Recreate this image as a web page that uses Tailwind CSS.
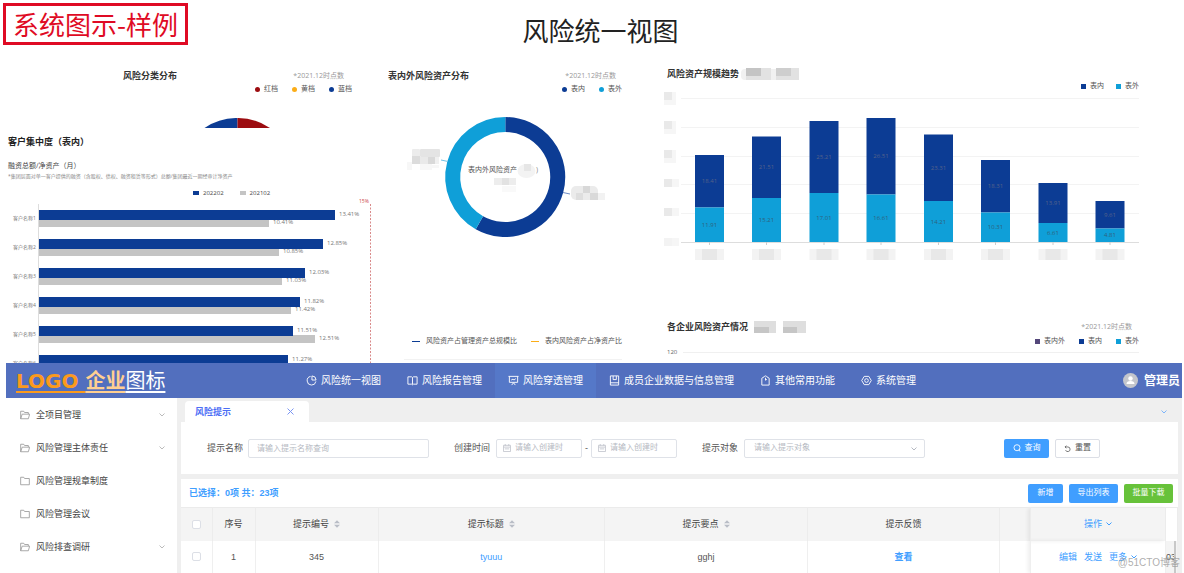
<!DOCTYPE html>
<html lang="zh-CN">
<head>
<meta charset="utf-8">
<meta name="viewport" content="width=device-width, initial-scale=1">
<title>风险统一视图</title>
<script src="https://cdn.jsdelivr.net/npm/@tailwindcss/browser@4"></script>
</head>
<body class="bg-white font-['Liberation_Sans','Noto_Sans_CJK_SC',sans-serif] text-[9px] leading-3 text-[#555] overflow-x-hidden">

<header class="grid grid-cols-[1fr_auto_1fr] items-start pt-[3px] pl-[3px]">
  <div class="justify-self-start border-3 border-[#df0a24] px-[7px] h-[42px] flex items-center text-[26px] leading-9 text-[#df0a24] font-['Noto_Sans_CJK_SC',sans-serif]">系统图示-样例</div>
  <h1 class="pt-3 pl-[14px] text-[26px] leading-[30px] text-[#222] font-['Noto_Sans_CJK_SC',sans-serif]">风险统一视图</h1>
</header>

<main class="grid grid-cols-[380fr_270fr_534fr] h-[318px] overflow-hidden font-['Open_Sans','Noto_Sans_CJK_SC',sans-serif]">
  <div>
    <section class="h-[83px] flex flex-col">
      <div class="flex justify-between pt-[25px] pl-[123px] pr-[36px]">
        <h2 class="font-bold text-[#333]">风险分类分布</h2>
        <span class="text-[7px] text-[#999]">*2021.12时点数</span>
      </div>
      <ul class="flex justify-end gap-[14px] pr-7 pt-px text-[7px] text-[#555]">
        <li class="flex items-center gap-1"><i class="size-[5px] rounded-full bg-[#9c0c10]"></i>红档</li>
        <li class="flex items-center gap-1"><i class="size-[5px] rounded-full bg-[#fbad18]"></i>黄档</li>
        <li class="flex items-center gap-1"><i class="size-[5px] rounded-full bg-[#0c3c94]"></i>蓝档</li>
      </ul>
      <svg class="w-full h-[10px] mt-auto" viewBox="0 118 380 10" aria-hidden="true">
        <path d="M204.500 128A56.500 56.500 0 0 1 237.500 118V128Z" fill="#0c3c94"/><path d="M237.500 118A56.500 56.500 0 0 1 270 128H237.500Z" fill="#9c0c10"/>
      </svg>
    </section>
    <section>
      <h2 class="pl-2 pt-2 text-[9px] font-bold text-[#222]">客户集中度（表内）</h2>
      <h3 class="pl-2 pt-3 text-[7px] text-[#444]">融资总额/净资产（月）</h3>
      <p class="pl-2 text-[5px] leading-[8px] text-[#888]">*集团层面对单一客户提供的融资（含股权、债权、融资租赁等形式）总额/集团最近一期经审计净资产</p>
      <ul class="flex gap-4 pl-[193px] pt-[7px] text-[6px] text-[#444]">
        <li class="flex items-center gap-1"><i class="w-[6px] h-1 bg-[#0c3c94]"></i>202202</li>
        <li class="flex items-center gap-1"><i class="w-[6px] h-1 bg-[#c4c4c4]"></i>202102</li>
      </ul>
      <svg id="customers" class="w-full h-[164px]" viewBox="0 199 380 164" role="img" aria-label="客户集中度"></svg>
    </section>
  </div>

  <section class="flex flex-col">
    <div class="flex justify-between pt-[25px] pl-2 pr-[34px]">
      <h2 class="font-bold text-[#333]">表内外风险资产分布</h2>
      <span class="text-[7px] text-[#999]">*2021.12时点数</span>
    </div>
    <ul class="flex justify-end gap-[14px] pr-7 pt-px text-[7px] text-[#555]">
      <li class="flex items-center gap-1"><i class="size-[5px] rounded-full bg-[#0c3c94]"></i>表内</li>
      <li class="flex items-center gap-1"><i class="size-[5px] rounded-full bg-[#0f9fd8]"></i>表外</li>
    </ul>
    <svg class="w-full h-[140px] mt-[14px]" viewBox="380 110 270 140" role="img" aria-label="表内外风险资产分布">
      <g fill="none" stroke-width="15">
        <path d="M505.300 125.500A52.500 52.500 0 1 1 479.400 223.700" stroke="#0c3c94"/>
        <path d="M479.400 223.700A52.500 52.500 0 0 1 505.300 125.500" stroke="#0f9fd8"/>
      </g>
      <path d="M441 161l7 1.500" stroke="#6fc0e4" fill="none"/><path d="M563 193.500l7 1.500" stroke="#6f8cc4" fill="none"/>
      <g fill="#f0f0f0">
        <path d="M407 163h5v8h-5zM420 165h12v6h-12zM432 166h7v3h-7z" fill="#f7f7f7"/>
        <rect x="412" y="150" width="8" height="15" rx="1" fill="#ececec"/><rect x="420" y="150" width="20" height="8" rx="1" fill="#e4e4e4"/><rect x="412" y="157" width="8" height="8" fill="#dcdcdc"/><rect x="420" y="158" width="8" height="7" fill="#e9e9e9"/><rect x="428" y="158" width="7" height="7" fill="#d9d9d9"/><rect x="435" y="158" width="4" height="7"/>
        <ellipse cx="526.500" cy="172" rx="9" ry="7" fill="#f3f3f3"/><rect x="524" y="165" width="7" height="7" fill="#e6e6e6"/>
        <rect x="494" y="179" width="22" height="7" fill="#ededed"/><rect x="502" y="179" width="7" height="7" fill="#e2e2e2"/><rect x="502" y="187" width="14" height="6" fill="#f9f9f9"/>
        <rect x="571" y="187" width="27" height="14" rx="5" fill="#ebebeb"/><rect x="583" y="187" width="7" height="7" fill="#d8d8d8"/><rect x="576" y="194" width="7" height="7" fill="#dedede"/><rect x="590" y="194" width="8" height="7" fill="#d9d9d9"/><rect x="598" y="194" width="7" height="7" fill="#f2f2f2"/>
      </g>
      <text x="468" y="173" font-size="7" fill="#555">表内外风险资产</text><text x="536" y="173" font-size="7" fill="#888">)</text>
    </svg>
    <ul class="mt-auto flex justify-end gap-[14px] pr-7 pb-3 text-[7px] text-[#555]">
      <li class="flex items-center gap-[6px]"><i class="w-2 h-px bg-[#0c3c94]"></i>风险资产占管理资产总规模比</li>
      <li class="flex items-center gap-[6px]"><i class="w-2 h-px bg-[#fbad18]"></i>表内风险资产占净资产比</li>
    </ul>
    <hr class="border-[#f2f2f2] ml-6 mr-7 mb-[3px]">
  </section>

  <div class="flex flex-col">
    <section>
      <div class="flex items-center gap-[2px] pt-[23px] pl-[17px]">
        <h2 class="font-bold text-[#333]">风险资产规模趋势</h2>
        <svg class="w-[58px] h-3" viewBox="0 0 58 12" aria-hidden="true"><rect y="1" width="58" height="11" rx="4" fill="#f1f1f1"/><path d="M5 0h25v12H5zM35 0h23v12H35z" fill="#e2e2e2"/><path d="M5 0h15v8H5z" fill="#c4c4c4"/><path d="M35 0h15v8H35z" fill="#cecece"/></svg>
      </div>
      <ul class="flex justify-end gap-3 pr-[45px] text-[7px] text-[#555]">
        <li class="flex items-center gap-1"><i class="size-[5px] bg-[#0c3c94]"></i>表内</li>
        <li class="flex items-center gap-1"><i class="size-[5px] bg-[#0f9fd8]"></i>表外</li>
      </ul>
      <svg id="trend" class="w-full h-[176px]" viewBox="650 92 534 176" role="img" aria-label="风险资产规模趋势"></svg>
    </section>
    <section class="mt-auto">
      <div class="flex items-center pl-[17px] pr-[52px]">
        <h2 class="font-bold text-[#333]">各企业风险资产情况</h2>
        <svg class="w-[52px] h-3 ml-[6px]" viewBox="0 0 52 12" aria-hidden="true"><path d="M0 0h22v12H0zM29 0h23v12H29z" fill="#dedede"/><path d="M0 6h15v6H0zM29 6h14v6H29z" fill="#c6c6c6"/></svg>
        <span class="ml-auto text-[7px] text-[#999]">*2021.12时点数</span>
      </div>
      <ul class="flex justify-end gap-[14px] pr-[45px] pt-[2px] text-[7px] text-[#555]">
        <li class="flex items-center gap-1"><i class="size-[5px] bg-[#54477a]"></i>表内外</li>
        <li class="flex items-center gap-1"><i class="size-[5px] bg-[#0c3c94]"></i>表内</li>
        <li class="flex items-center gap-1"><i class="size-[5px] bg-[#0f9fd8]"></i>表外</li>
      </ul>
      <div class="flex items-center gap-[6px] pl-[17px] pr-[45px] h-[10px] mb-[6px] text-[6px] text-[#666]">120<hr class="grow border-[#f0f0f0]"></div>
    </section>
  </div>
</main>

<div class="relative ml-[6px] mr-[2px] border-b border-[#e6e6e6]">
  <header class="flex items-stretch h-[35px] bg-[#526fbe] text-white text-[10px]">
    <a href="#" class="w-[287px] shrink-0 pl-[10px] flex items-center text-[20px] leading-6 whitespace-pre"><span class="underline decoration-2 underline-offset-3 text-[#fb9a1c] font-bold font-['DejaVu_Sans',sans-serif]">LOGO&nbsp;</span><span class="underline decoration-2 underline-offset-3 font-bold text-[#ffcf91]">企业</span><span class="underline decoration-2 underline-offset-3">图标</span></a>
    <nav class="flex items-stretch [&>a]:flex [&>a]:items-center [&>a]:gap-1 [&>a]:px-[13px] [&_svg]:size-[11px] [&_svg]:fill-none [&_svg]:stroke-current whitespace-nowrap">
      <a href="#"><svg viewBox="0 0 12 12"><path d="M5 1.500A4.800 4.800 0 1 0 10.800 7"/><path d="M6.500 1v4.500H11A4.600 4.600 0 0 0 6.500 1Z"/></svg>风险统一视图</a>
      <a href="#"><svg viewBox="0 0 12 12"><path d="M1 2h4l1 .8L7 2h4v8H7l-1 .7L5 10H1ZM6 2.800v7.500"/></svg>风险报告管理</a>
      <a href="#" class="bg-[#5578c8]" aria-current="page"><svg viewBox="0 0 12 12"><path d="M.5 1.500h11M1.500 1.500V8h9V1.500M4 11l2-2.500L8 11M3.500 5.500l2-1 1 1 2-1.500"/></svg>风险穿透管理</a>
      <a href="#"><svg viewBox="0 0 12 12"><path d="M1.500 1h9v10h-9ZM1.500 8.500h9M4.500 1v4h3.500V1"/></svg>成员企业数据与信息管理</a>
      <a href="#"><svg viewBox="0 0 12 12"><path d="M2 3.500 4.500 2a1.600 1.600 0 0 1 3 0L10 3.500V11H2ZM6 3v3M6 5h1.500"/></svg>其他常用功能</a>
      <a href="#"><svg viewBox="0 0 12 12"><path d="M3.500 1.500h5L11.200 6 8.500 10.500h-5L.8 6Z"/><circle cx="6" cy="6" r="2"/></svg>系统管理</a>
    </nav>
    <div class="ml-auto pr-[2px] flex items-center gap-[6px] text-[12px] font-bold whitespace-nowrap">
      <svg class="size-[15px]" viewBox="0 0 15 15" aria-hidden="true"><circle cx="7.500" cy="7.500" r="7.500" fill="#c4c6cc"/><circle cx="7.500" cy="5.500" r="2.200" fill="#fff"/><path d="M3.500 11q0-3 4-3t4 3Z" fill="#fff"/></svg>管理员
    </div>
  </header>

  <div class="flex">
    <aside class="w-[171px] shrink-0">
      <ul class="[&_a]:flex [&_a]:items-center [&_a]:h-[33px] [&_a]:pl-[14px] [&_a]:pr-3 [&_a]:gap-[6px] text-[#444]">
        <li><a href="#"><svg class="size-[10px] fill-none text-[#999] stroke-current" viewBox="0 0 12 12"><path d="M.8 10.500V1.500h3.700l1 1.500H10v2M.8 10.500 2.600 5h9L10 10.500Z"/></svg>全项目管理<svg class="ml-auto w-[6px] h-1 fill-none text-[#bbb] stroke-current" viewBox="0 0 6 4"><path d="m.5.500 2.500 2.500L5.500.500"/></svg></a></li>
        <li><a href="#"><svg class="size-[10px] fill-none text-[#999] stroke-current" viewBox="0 0 12 12"><path d="M.8 10.500V1.500h3.700l1 1.500H10v2M.8 10.500 2.600 5h9L10 10.500Z"/></svg>风险管理主体责任<svg class="ml-auto w-[6px] h-1 fill-none text-[#bbb] stroke-current" viewBox="0 0 6 4"><path d="m.5.500 2.500 2.500L5.500.500"/></svg></a></li>
        <li><a href="#"><svg class="size-[10px] fill-none text-[#999] stroke-current" viewBox="0 0 12 12"><path d="M.8 10.500V1.500h3.700l1 1.500h5.700v7.500Z"/></svg>风险管理规章制度</a></li>
        <li><a href="#"><svg class="size-[10px] fill-none text-[#999] stroke-current" viewBox="0 0 12 12"><path d="M.8 10.500V1.500h3.700l1 1.500h5.700v7.500Z"/></svg>风险管理会议</a></li>
        <li><a href="#"><svg class="size-[10px] fill-none text-[#999] stroke-current" viewBox="0 0 12 12"><path d="M.8 10.500V1.500h3.700l1 1.500H10v2M.8 10.500 2.600 5h9L10 10.500Z"/></svg>风险排查调研<svg class="ml-auto w-[6px] h-1 fill-none text-[#bbb] stroke-current" viewBox="0 0 6 4"><path d="m.5.500 2.500 2.500L5.500.500"/></svg></a></li>
      </ul>
    </aside>

    <div class="grow min-w-0 bg-[#efefef] pl-1 pr-1">
      <div class="flex items-end h-6 pl-1 pr-[11px]">
        <div class="w-[124px] h-[21px] rounded-t bg-white flex items-center justify-between pl-[10px] pr-[15px] font-bold text-[#4c6ef5]">风险提示
          <button aria-label="关闭" class="cursor-pointer text-[#7c96f2]"><svg class="size-[7px] fill-none stroke-current" viewBox="0 0 7 7"><path d="m.5.500 6 6M6.500.500l-6 6"/></svg></button>
        </div>
        <button aria-label="展开" class="ml-auto mb-2 text-[#7db5fa]"><svg class="w-[6px] h-1 fill-none stroke-current" viewBox="0 0 6 4"><path d="m.5.500 2.500 2.500L5.500.500"/></svg></button>
      </div>

      <form class="flex items-center h-[52px] bg-white pl-[26px] pr-[78px] whitespace-nowrap">
        <label for="name">提示名称</label>
        <input id="name" placeholder="请输入提示名称查询" class="ml-[5px] w-[181px] h-[19px] rounded-xs border border-[#dfe2e8] px-2 placeholder:text-[#b5b9c2] text-[8px]">
        <label for="from" class="ml-[25px]">创建时间</label>
        <span class="ml-[6px] flex items-center w-[86px] h-[19px] rounded-xs border border-[#dfe2e8] px-[6px] gap-1"><svg class="size-2 shrink-0 fill-none text-[#c4c7ce] stroke-current" viewBox="0 0 9 9"><path d="M.5 1.500h8v7h-8ZM.5 3.500h8M2.500 0v2M6.500 0v2M2 5.500h5"/></svg><input id="from" placeholder="请输入创建时" class="min-w-0 w-full text-[8px] placeholder:text-[#b5b9c2]"></span>
        <span class="px-[3px]">-</span>
        <span class="flex items-center w-[86px] h-[19px] rounded-xs border border-[#dfe2e8] px-[6px] gap-1"><svg class="size-2 shrink-0 fill-none text-[#c4c7ce] stroke-current" viewBox="0 0 9 9"><path d="M.5 1.500h8v7h-8ZM.5 3.500h8M2.500 0v2M6.500 0v2M2 5.500h5"/></svg><input aria-label="结束时间" placeholder="请输入创建时" class="min-w-0 w-full text-[8px] placeholder:text-[#b5b9c2]"></span>
        <label for="target" class="ml-[25px]">提示对象</label>
        <span class="ml-[6px] relative">
          <select id="target" class="appearance-none block w-[181px] h-[19px] rounded-xs border border-[#dfe2e8] px-[9px] text-[8px] text-[#b5b9c2]"><option>请输入提示对象</option></select>
          <svg class="absolute right-2 top-2 w-[6px] h-1 fill-none text-[#b5b9c2] stroke-current pointer-events-none" viewBox="0 0 6 4"><path d="m.5.500 2.500 2.500L5.500.500"/></svg>
        </span>
        <button type="submit" class="ml-auto w-[45px] h-[19px] rounded-xs bg-[#409eff] text-white text-[8px] flex items-center justify-center gap-1"><svg class="size-2 fill-none stroke-current" viewBox="0 0 9 9"><circle cx="4.500" cy="4.200" r="3.400"/><path d="m6.500 6.500 1.500 2"/></svg>查询</button>
        <button type="reset" class="ml-[6px] w-[45px] h-[19px] rounded-xs border border-[#dcdfe6] text-[8px] flex items-center justify-center gap-1"><svg class="size-[7px] fill-none stroke-current" viewBox="0 0 9 9"><path d="M1.500 2.500h3.500a3 3 0 1 1-3 4M3 .8 1.300 2.500 3 4.200"/></svg>重置</button>
      </form>

      <section class="mt-[5px] bg-white">
        <div class="flex items-center gap-[6px] h-7 pl-2 pr-[5px] text-[8px] text-white [&>button]:h-[19px] [&>button]:rounded-xs">
          <p class="mr-auto text-[9px] font-bold text-[#409eff]">已选择：0项 共：23项</p>
          <button class="w-[35px] bg-[#409eff]">新增</button>
          <button class="w-[49px] bg-[#409eff]">导出列表</button>
          <button class="w-[49px] bg-[#67c23a]">批量下载</button>
        </div>
        <table class="w-full table-fixed border-collapse text-center [&_th]:font-normal [&_th]:p-0 [&_td]:p-0 whitespace-nowrap">
          <colgroup><col class="w-[31px]"><col class="w-[43px]"><col class="w-[123px]"><col><col class="w-[203px]"><col class="w-[192px]"><col class="w-[31px]"><col class="w-[135px]"><col class="w-[12px]"></colgroup>
          <thead class="bg-[#f4f4f4] text-[#444]">
            <tr class="h-[33px] border-t border-[#ebebeb] [&>th]:border-r [&>th]:border-[#ececec]">
              <th><input type="checkbox" aria-label="全选" class="appearance-none block mx-auto size-[9px] bg-white border border-[#dcdfe6] rounded-xs"></th>
              <th>序号</th>
              <th><span class="inline-flex items-center gap-[5px]">提示编号<svg class="w-[6px] h-2 fill-[#b9bdc6]" viewBox="0 0 6 8"><path d="M0 3.300 3 .3l3 3ZM0 4.700h6l-3 3Z"/></svg></span></th>
              <th><span class="inline-flex items-center gap-[5px]">提示标题<svg class="w-[6px] h-2 fill-[#b9bdc6]" viewBox="0 0 6 8"><path d="M0 3.300 3 .3l3 3ZM0 4.700h6l-3 3Z"/></svg></span></th>
              <th><span class="inline-flex items-center gap-[5px]">提示要点<svg class="w-[6px] h-2 fill-[#b9bdc6]" viewBox="0 0 6 8"><path d="M0 3.300 3 .3l3 3ZM0 4.700h6l-3 3Z"/></svg></span></th>
              <th>提示反馈</th><th></th>
              <th class="shadow-[-3px_0_4px_rgba(0,0,0,0.07)]"><button class="inline-flex items-center gap-1 text-[#409eff]">操作<svg class="w-[6px] h-1 fill-none stroke-current" viewBox="0 0 6 4"><path d="m.5.500 2.500 2.500L5.500.500"/></svg></button></th>
              <th class="bg-white"></th>
            </tr>
          </thead>
          <tbody>
            <tr class="h-8 [&>td]:border-r [&>td]:border-[#efefef]">
              <td><input type="checkbox" aria-label="选择第1行" class="appearance-none block mx-auto size-[9px] bg-white border border-[#dcdfe6] rounded-xs"></td>
              <td>1</td><td>345</td><td><a href="#" class="text-[#409eff]">tyuuu</a></td><td>gghj</td><td><a href="#" class="font-bold text-[#409eff]">查看</a></td><td></td>
              <td class="shadow-[-3px_0_4px_rgba(0,0,0,0.07)]"><span class="inline-flex items-center gap-[7px] text-[#409eff]"><a href="#">编辑</a><a href="#">发送</a><a href="#" class="inline-flex items-center gap-1">更多<svg class="w-[6px] h-1 fill-none stroke-current" viewBox="0 0 6 4"><path d="m.5.500 2.500 2.500L5.500.500"/></svg></a></span></td>
              <td class="bg-[#f4f4f4] overflow-hidden"><div class="h-8 w-2 leading-8 overflow-hidden border-r-2 border-[#c8c8c8] box-content text-left">03</div></td>
            </tr>
          </tbody>
        </table>
      </section>
    </div>
  </div>
  <span class="absolute right-[2px] bottom-[2px] text-[10px] leading-4 text-[#999]/80 pointer-events-none">@51CTO博客</span>
</div>

<script>
  // Horizontal bars: current period over previous period, one pair per customer
  const current = [[13.41, 335], [12.85, 323], [12.03, 305], [11.82, 300], [11.51, 293], [11.27, 288]];
  const previous = [[10.41, 269], [10.85, 279], [11.03, 282], [11.42, 291], [12.51, 315]];
  const label = `font-size="6" fill="#777"`;
  let h = `<path d="M38.500 204V363" stroke="#ddd"/>`;
  previous.forEach(([v, x], i) => {
    const y = 219 + i * 29;
    h += `<rect x="39" y="${y}" width="${x - 39}" height="8" fill="#c4c4c4"/><text x="${x + 4}" y="${y + 5}" ${label}>${v.toFixed(2)}%</text>`;
  });
  current.forEach(([v, x], i) => {
    const y = 210 + i * 29;
    h += `<rect x="39" y="${y}" width="${x - 39}" height="10" fill="#0c3c94"/><text x="${x + 4}" y="${y + 6}" ${label}>${v.toFixed(2)}%</text>`;
    h += `<text x="13" y="${y + 10}" font-size="5" fill="#777">客户名称${i + 1}</text>`;
  });
  h += `<path d="M370.500 204V363" stroke="#d98a8a" stroke-dasharray="2 1.500"/><text x="359" y="203" font-size="5" fill="#c44">15%</text>`;
  document.getElementById('customers').innerHTML = h;

  // Stacked columns: [x, top, split, inner value, outer value]
  const cols = [[695,155,207.5,'18.41','11.91'],[752,136.5,198,'21.51','15.21'],[809.5,121,193,'25.21','17.01'],[866.5,118,194.5,'26.51','16.61'],[924,134.5,201,'23.31','14.21'],[981,160,212.5,'18.31','10.31'],[1038.5,183,223,'13.91','6.61'],[1095.5,201,228.5,'9.61','4.81']];
  let t = '';
  [98.5, 127.5, 156.5, 184.5, 213.5].forEach(y => { t += `<path d="M681 ${y}H1139" stroke="#f3f3f3"/>`; });
  t += `<path d="M681 242.500H1139" stroke="#ddd"/>`;
  [92, 121, 150, 179, 208, 238].forEach((y, i) => {
    t += `<rect x="664" y="${y}" width="${i < 3 ? 12 : 15}" height="${i < 3 ? 13 : 8}" fill="#f6f6f6"/><rect x="664" y="${y}" width="8" height="8" fill="${i < 5 ? '#e9e9e9' : '#f3f3f3'}"/>`;
  });
  cols.forEach(([x, a, b, p, q]) => {
    const c = x + 14.5;
    t += `<rect x="${x}" y="${a}" width="29" height="${b - a}" fill="#0c3c94"/><rect x="${x}" y="${b}" width="29" height="${242 - b}" fill="#0f9fd8"/>`;
    t += `<g font-size="6" text-anchor="middle"><text x="${c}" y="${(a + b) / 2 + 2}" fill="#56628a">${p}</text><text x="${c}" y="${(b + 242) / 2 + 2}" fill="#2f5f7c">${q}</text></g>`;
    t += `<path d="M${c} 242v3" stroke="#ccc"/><rect x="${x}" y="249" width="29" height="11" fill="#f3f3f3"/><rect x="${x + 7}" y="249" width="15" height="11" fill="#e8e8e8"/>`;
  });
  document.getElementById('trend').innerHTML = t;
</script>
</body>
</html>
